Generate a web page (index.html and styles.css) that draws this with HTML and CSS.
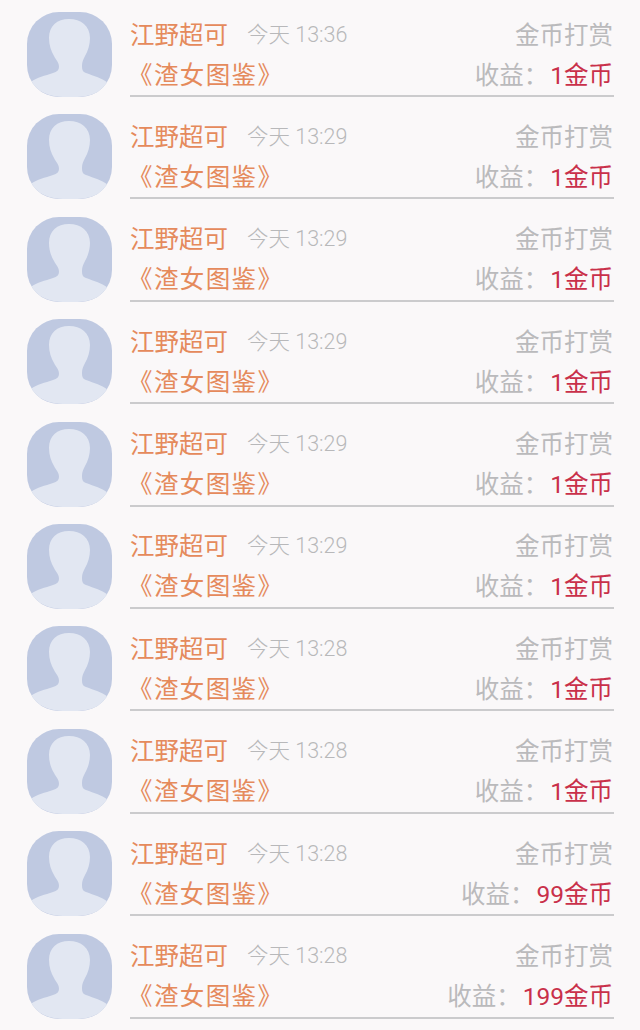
FILE: index.html
```html
<!DOCTYPE html>
<html lang="zh-CN">
<head>
    <meta charset="UTF-8">
    <title>金币打赏</title>
    <link rel="stylesheet" href="styles.css">
</head>
<body>
    <svg class="defs" width="0" height="0">
        <symbol id="avatar" viewBox="0 0 85 85">
            <path class="avatar-figure" d="M42 7C30 7 22 14 22 26C22 33 24 39 27 44C29 48 32 50 32 55C32 58 30 60 26 61C18 64 10 65 4 70C10 80 24 85 36 85H50C62 85 75 80 81 71C75 66 67 64 59 61C56 60 55 58 55 54C55 50 56 48 58 44C61 39 63 32 63 26C63 14 54 7 42 7Z"/>
        </symbol>
    </svg>
    <ul class="list">
        <li class="row">
            <svg class="avatar"><use href="#avatar"/></svg>
            <div class="info">
                <div class="line">
                    <span class="name">江野超可</span><span class="time">今天 13:36</span><span class="type">金币打赏</span>
                </div>
                <div class="line">
                    <span class="book">《渣女图鉴》</span><span class="income">收益：<em>1金币</em></span>
                </div>
            </div>
        </li>
        <li class="row">
            <svg class="avatar"><use href="#avatar"/></svg>
            <div class="info">
                <div class="line">
                    <span class="name">江野超可</span><span class="time">今天 13:29</span><span class="type">金币打赏</span>
                </div>
                <div class="line">
                    <span class="book">《渣女图鉴》</span><span class="income">收益：<em>1金币</em></span>
                </div>
            </div>
        </li>
        <li class="row">
            <svg class="avatar"><use href="#avatar"/></svg>
            <div class="info">
                <div class="line">
                    <span class="name">江野超可</span><span class="time">今天 13:29</span><span class="type">金币打赏</span>
                </div>
                <div class="line">
                    <span class="book">《渣女图鉴》</span><span class="income">收益：<em>1金币</em></span>
                </div>
            </div>
        </li>
        <li class="row">
            <svg class="avatar"><use href="#avatar"/></svg>
            <div class="info">
                <div class="line">
                    <span class="name">江野超可</span><span class="time">今天 13:29</span><span class="type">金币打赏</span>
                </div>
                <div class="line">
                    <span class="book">《渣女图鉴》</span><span class="income">收益：<em>1金币</em></span>
                </div>
            </div>
        </li>
        <li class="row">
            <svg class="avatar"><use href="#avatar"/></svg>
            <div class="info">
                <div class="line">
                    <span class="name">江野超可</span><span class="time">今天 13:29</span><span class="type">金币打赏</span>
                </div>
                <div class="line">
                    <span class="book">《渣女图鉴》</span><span class="income">收益：<em>1金币</em></span>
                </div>
            </div>
        </li>
        <li class="row">
            <svg class="avatar"><use href="#avatar"/></svg>
            <div class="info">
                <div class="line">
                    <span class="name">江野超可</span><span class="time">今天 13:29</span><span class="type">金币打赏</span>
                </div>
                <div class="line">
                    <span class="book">《渣女图鉴》</span><span class="income">收益：<em>1金币</em></span>
                </div>
            </div>
        </li>
        <li class="row">
            <svg class="avatar"><use href="#avatar"/></svg>
            <div class="info">
                <div class="line">
                    <span class="name">江野超可</span><span class="time">今天 13:28</span><span class="type">金币打赏</span>
                </div>
                <div class="line">
                    <span class="book">《渣女图鉴》</span><span class="income">收益：<em>1金币</em></span>
                </div>
            </div>
        </li>
        <li class="row">
            <svg class="avatar"><use href="#avatar"/></svg>
            <div class="info">
                <div class="line">
                    <span class="name">江野超可</span><span class="time">今天 13:28</span><span class="type">金币打赏</span>
                </div>
                <div class="line">
                    <span class="book">《渣女图鉴》</span><span class="income">收益：<em>1金币</em></span>
                </div>
            </div>
        </li>
        <li class="row">
            <svg class="avatar"><use href="#avatar"/></svg>
            <div class="info">
                <div class="line">
                    <span class="name">江野超可</span><span class="time">今天 13:28</span><span class="type">金币打赏</span>
                </div>
                <div class="line">
                    <span class="book">《渣女图鉴》</span><span class="income">收益：<em>99金币</em></span>
                </div>
            </div>
        </li>
        <li class="row">
            <svg class="avatar"><use href="#avatar"/></svg>
            <div class="info">
                <div class="line">
                    <span class="name">江野超可</span><span class="time">今天 13:28</span><span class="type">金币打赏</span>
                </div>
                <div class="line">
                    <span class="book">《渣女图鉴》</span><span class="income">收益：<em>199金币</em></span>
                </div>
            </div>
        </li>
    </ul>
</body>
</html>
```
FILE: styles.css
```css
html, body {
    height: 1030px;
    overflow: hidden;
}

body {
    margin: 0;
    background: #faf8f9;
    font-family: Roboto, "Noto Sans CJK SC", sans-serif;
}

.defs {
    display: block;
    height: 0;
}

.list {
    margin: 0;
    padding: 0;
    list-style: none;
}

.row {
    display: flex;
    gap: 18px;
    height: 102.4px;
    padding: 12px 26px 0 27px;
    box-sizing: border-box;
}

.avatar {
    flex: none;
    width: 85px;
    height: 85px;
    border-radius: 32px;
    background: #bfc9e1;
}

.avatar-figure {
    fill: #e2e7f2;
}

.info {
    flex: 1;
    height: 85px;
    padding-top: 1px;
    border-bottom: 2px solid #cbcbcd;
    box-sizing: border-box;
    min-width: 0;
}

.line {
    display: flex;
    align-items: center;
    height: 40px;
    padding-right: 1px;
}

.name {
    font-size: 24.5px;
    color: #e58a5c;
}

.time {
    margin-left: 19px;
    margin-bottom: 2px;
    font-size: 21.5px;
    font-weight: 300;
    color: #b8b8ba;
}

.type {
    margin-left: auto;
    font-size: 24.5px;
    color: #bababc;
}

.book {
    margin-left: -2px;
    font-size: 24.5px;
    letter-spacing: 1.4px;
    color: #e58a5c;
}

.income {
    margin-left: auto;
    font-size: 24.5px;
    color: #bababc;
}

.income em {
    margin-left: 2px;
    font-style: normal;
    color: #c9304a;
}
```
